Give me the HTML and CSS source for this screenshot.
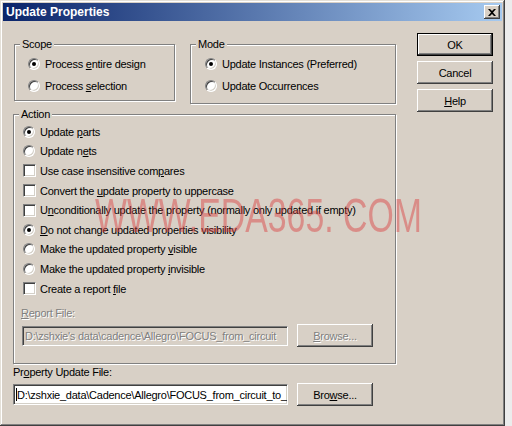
FILE: index.html
```html
<!DOCTYPE html>
<html lang="en">
<head>
    <meta charset="UTF-8">
    <title>Update Properties</title>
    <link rel="stylesheet" href="styles.css">
</head>
<body>

    <div class="window">
        <div class="titlebar">
            <span class="title">Update Properties</span>
            <span class="close">
                <svg width="8" height="7" viewBox="0 0 8 7"><path d="M0 0h2l2 2 2-2h2L5 3.5 8 7H6L4 5 2 7H0l3-3.5z" fill="#000"/></svg>
            </span>
        </div>

        <div class="content">
            <div class="main">
                <div class="top">
                    <fieldset class="group scope">
                        <legend>Scope</legend>
                        <div class="opt"><span class="radio on"></span><span>Process <u>e</u>ntire design</span></div>
                        <div class="opt"><span class="radio"></span><span>Process <u>s</u>election</span></div>
                    </fieldset>
                    <fieldset class="group mode">
                        <legend>Mode</legend>
                        <div class="opt"><span class="radio on"></span><span>Update Instances (Preferred)</span></div>
                        <div class="opt"><span class="radio"></span><span>Update Occurrences</span></div>
                    </fieldset>
                </div>

                <fieldset class="group action">
                    <legend>Action</legend>
                    <div class="opt"><span class="radio on"></span><span>Update <u>p</u>arts</span></div>
                    <div class="opt"><span class="radio"></span><span>Update n<u>e</u>ts</span></div>
                    <div class="opt"><span class="check"></span><span>Use case insensitive com<u>p</u>ares</span></div>
                    <div class="opt"><span class="check"></span><span>Convert the <u>u</u>pdate property to uppercase</span></div>
                    <div class="opt"><span class="check"></span><span>U<u>n</u>conditionally update the property (normally only updated if empty)</span></div>
                    <div class="opt"><span class="radio on"></span><span><u>D</u>o not change updated properties visibility</span></div>
                    <div class="opt"><span class="radio"></span><span>Make the updated property <u>v</u>isible</span></div>
                    <div class="opt"><span class="radio"></span><span>Make the updated property <u>i</u>nvisible</span></div>
                    <div class="opt"><span class="check"></span><span>Create a report <u>f</u>ile</span></div>

                    <div class="label disabled"><u>R</u>eport File:</div>
                    <div class="file-row">
                        <div class="field disabled report"><span>D:\zshxie's data\cadence\Allegro\FOCUS_from_circuit</span></div>
                        <button class="btn disabled"><u>B</u>rowse...</button>
                    </div>
                </fieldset>

                <div class="label prop-label">Pr<u>o</u>perty Update File:</div>
                <div class="file-row">
                    <div class="field prop"><span class="caret"></span><span>D:\zshxie_data\Cadence\Allegro\FOCUS_from_circuit_to_board.cfg</span></div>
                    <button class="btn">Bro<u>w</u>se...</button>
                </div>
            </div>

            <div class="side">
                <button class="btn default">OK</button>
                <button class="btn">Cancel</button>
                <button class="btn"><u>H</u>elp</button>
            </div>
        </div>

        <div class="watermark">WWW.EDA365. COM</div>
    </div>

</body>
</html>
```

FILE: styles.css
```css
body {
    margin: 0;
    background: #ececec;
    font-family: 'Liberation Sans', Arial, sans-serif;
    font-size: 11px;
    letter-spacing: -0.25px;
    color: #000;
}

.window {
    position: relative;
    width: 505px;
    height: 426px;
    box-sizing: border-box;
    padding: 3px;
    background: #d8d0c6;
    box-shadow: inset -1px -1px #404040, inset 1px 1px #e4e0d8, inset -2px -2px #808080, inset 2px 2px #fff;
}

/* Title bar */
.titlebar {
    height: 18px;
    display: flex;
    align-items: center;
    justify-content: space-between;
    padding: 0 2px 0 3px;
    background: linear-gradient(to right, #0a246a, #a6caf0);
    color: #fff;
    font-size: 12px;
    font-weight: bold;
    letter-spacing: 0;
}

.close {
    width: 16px;
    height: 14px;
    box-sizing: border-box;
    display: flex;
    justify-content: center;
    align-items: center;
    background: #d8d0c6;
    box-shadow: inset -1px -1px #404040, inset 1px 1px #fff, inset -2px -2px #808080;
}

.content {
    display: flex;
}

.main {
    width: 383px;
    margin-left: 10px;
    padding-top: 17px;
}

.side {
    width: 76px;
    margin-left: 21px;
    padding-top: 12px;
    display: flex;
    flex-direction: column;
    gap: 5px;
}

/* Group boxes */
.top {
    display: flex;
    align-items: flex-start;
    gap: 15px;
}

.group {
    margin: 0;
    padding: 0 0 0 5px;
    border: 1px solid #808080;
    box-shadow: inset 1px 1px #fff, 1px 1px #fff;
    min-width: 0;
}

.group legend {
    padding: 0 2px;
    line-height: 13px;
    background: #d8d0c6;
}

.scope {
    width: 161px;
    margin-left: 1px;
    box-sizing: border-box;
    padding-top: 2px;
    padding-bottom: 3px;
}

.mode {
    width: 206px;
    box-sizing: border-box;
    padding-top: 2px;
    padding-bottom: 6px;
}

.scope .opt {
    height: 22px;
    margin-left: 8px;
}

.mode .opt {
    height: 22px;
    margin-left: 9px;
}

.action {
    margin-top: 4px;
    padding-top: 1px;
    padding-bottom: 16px;
}

.action .opt {
    height: 19.6px;
    margin-left: 4px;
}

.opt {
    display: flex;
    align-items: center;
    white-space: nowrap;
}

/* Radios and checkboxes */
.radio,
.check {
    position: relative;
    flex: none;
    box-sizing: border-box;
    background: #fff;
    border: 1px solid;
    border-color: #808080 #fff #fff #808080;
    box-shadow: inset 1px 1px #404040, inset -1px -1px #d4d0c8;
    margin-right: 5px;
}

.radio {
    width: 12px;
    height: 12px;
    border-radius: 50%;
}

.radio.on::after {
    content: '';
    position: absolute;
    left: 3px;
    top: 3px;
    width: 4px;
    height: 4px;
    border-radius: 50%;
    background: #000;
}

.check {
    width: 13px;
    height: 13px;
    margin-right: 4px;
}

/* File rows */
.label {
    line-height: 13px;
    white-space: nowrap;
}

.action .label {
    margin: 9px 0 0 2px;
}

.disabled {
    color: #808080;
    text-shadow: 1px 1px #fff;
}

.file-row {
    display: flex;
    align-items: center;
    gap: 9px;
}

.action .file-row {
    margin: 4px 0 0 3px;
}

.field {
    box-sizing: border-box;
    height: 20px;
    display: flex;
    align-items: center;
    padding-left: 2px;
    overflow: hidden;
    white-space: nowrap;
    background: #fff;
    border: 1px solid;
    border-color: #808080 #fff #fff #808080;
    box-shadow: inset 1px 1px #404040, inset -1px -1px #d4d0c8;
}

.field.disabled {
    background: #d8d0c6;
}

.report {
    width: 266px;
}

.prop {
    width: 275px;
    height: 21px;
}

.caret {
    flex: none;
    width: 1px;
    height: 13px;
    background: #000;
}

.prop-label {
    margin-top: 2px;
}

.main > .file-row {
    margin-top: 4px;
}

/* Buttons */
.btn {
    box-sizing: border-box;
    width: 76px;
    height: 23px;
    padding: 0;
    border: none;
    background: #d8d0c6;
    font-family: inherit;
    font-size: 11px;
    letter-spacing: -0.25px;
    color: #000;
    box-shadow: inset -1px -1px #404040, inset 1px 1px #fff, inset -2px -2px #808080;
}

.btn.disabled {
    color: #808080;
}

.btn.default {
    border: 1px solid #000;
}

/* Watermark drawn over the dialog */
.watermark {
    position: absolute;
    left: 95px;
    top: 191px;
    font-size: 49px;
    line-height: 1;
    letter-spacing: 0;
    white-space: nowrap;
    color: rgba(220, 60, 60, 0.45);
    transform: scaleX(0.69);
    transform-origin: left top;
    pointer-events: none;
}
```
